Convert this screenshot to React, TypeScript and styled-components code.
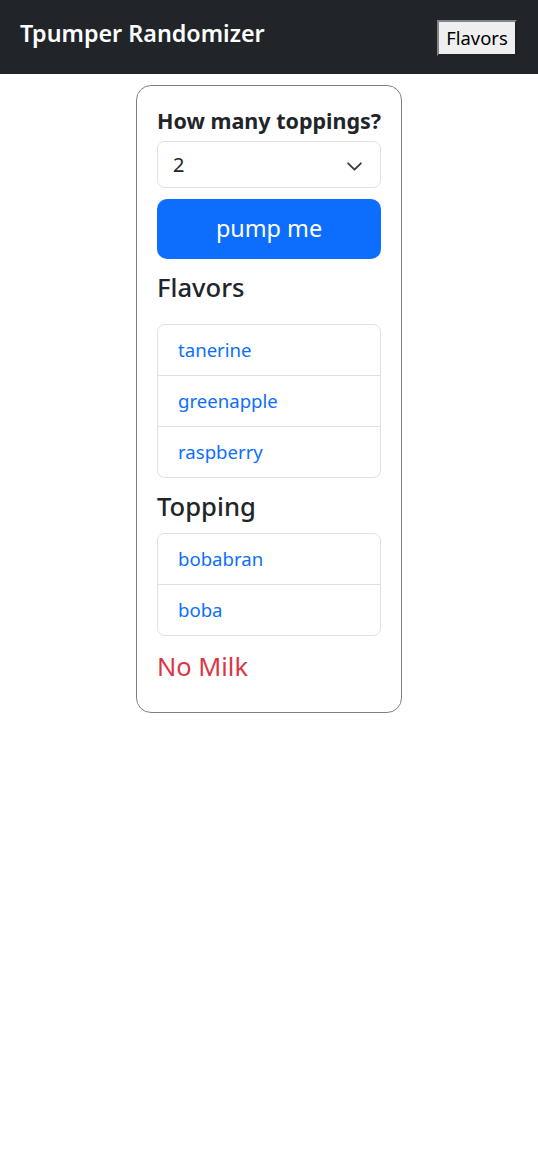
import React from "react";
import styled, { createGlobalStyle } from "styled-components";

const Global = createGlobalStyle`
  html, body { margin: 0; padding: 0; background: #fff; }
  body {
    font-family: "Noto Sans", "Open Sans", sans-serif;
    font-size: 20px;
    line-height: 1.5;
    color: #212529;
  }
  * { box-sizing: border-box; }
`;

const NavBar = styled.nav`
  height: 74px;
  background: #212529;
  display: flex;
  align-items: center;
  justify-content: space-between;
  padding: 0 21px 0 20px;
`;

const Brand = styled.div`
  color: #fff;
  font-size: 23.3px;
  font-weight: 600;
  line-height: 1.5;
  margin-top: -8px;
`;

const NavButton = styled.button`
  font-family: inherit;
  font-size: 18.4px;
  line-height: 1.5;
  color: #000;
  background: #efefef;
  border: 2px outset #767676;
  border-color: #858585 #767676 #767676 #858585;
  padding: 0 6px;
  height: 36px;
  width: 80px;
  margin-top: 1px;
`;

const Card = styled.div`
  width: 266px;
  margin: 11px auto 0;
  border: 1px solid #808080;
  border-radius: 15px;
  padding: 20px 20px 20px;
  display: flex;
  flex-direction: column;
`;

const Label = styled.label`
  font-weight: 700;
  font-size: 21.5px;
  line-height: 30px;
  white-space: nowrap;
`;

const SelectBox = styled.div`
  position: relative;
  margin-top: 5px;
  height: 47px;
  border: 1px solid #dee2e6;
  border-radius: 7.5px;
  display: flex;
  align-items: center;
  padding: 0 15px;
  font-size: 20px;
`;

const Chevron = styled.svg`
  position: absolute;
  right: 17px;
  top: 50%;
  width: 17px;
  height: 17px;
  margin-top: -7px;
`;

const PumpButton = styled.button`
  margin-top: 11px;
  height: 60px;
  background: #0d6efd;
  color: #fff;
  border: none;
  border-radius: 10px;
  font-family: inherit;
  font-size: 23.4px;
  line-height: 1.5;
`;

const Heading = styled.h4<{ $mb: number }>`
  margin: 11px 0 ${(p) => p.$mb}px;
  font-size: 25.6px;
  font-weight: 500;
  line-height: 36px;
`;

const ListGroup = styled.ul`
  list-style: none;
  margin: 0;
  padding: 0;
  border: 1px solid #dee2e6;
  border-radius: 7.5px;
`;

const ListItem = styled.li`
  height: 51px;
  padding: 10px 20px;
  line-height: 30px;
  font-size: 18.6px;
  color: #0d6efd;
  border-top: 1px solid #dee2e6;
  &:first-child { border-top: none; height: 50px; }
`;

const Milk = styled.div`
  margin-top: 11px;
  margin-bottom: 7px;
  font-size: 25.4px;
  line-height: 38px;
  color: #dc3545;
`;

export default function App() {
  const flavors = ["tanerine", "greenapple", "raspberry"];
  const toppings = ["bobabran", "boba"];
  return (
    <>
      <Global />
      <NavBar>
        <Brand>Tpumper Randomizer</Brand>
        <NavButton>Flavors</NavButton>
      </NavBar>
      <Card>
        <Label>How many toppings?</Label>
        <SelectBox>
          2
          <Chevron viewBox="0 0 16 16">
            <path d="m2 5 6 6 6-6" fill="none" stroke="#343a40" strokeWidth="1.7" strokeLinecap="round" strokeLinejoin="round" />
          </Chevron>
        </SelectBox>
        <PumpButton>pump me</PumpButton>
        <Heading $mb={18}>Flavors</Heading>
        <ListGroup>
          {flavors.map((f) => (
            <ListItem key={f}>{f}</ListItem>
          ))}
        </ListGroup>
        <Heading $mb={8}>Topping</Heading>
        <ListGroup>
          {toppings.map((t) => (
            <ListItem key={t}>{t}</ListItem>
          ))}
        </ListGroup>
        <Milk>No Milk</Milk>
      </Card>
    </>
  );
}
